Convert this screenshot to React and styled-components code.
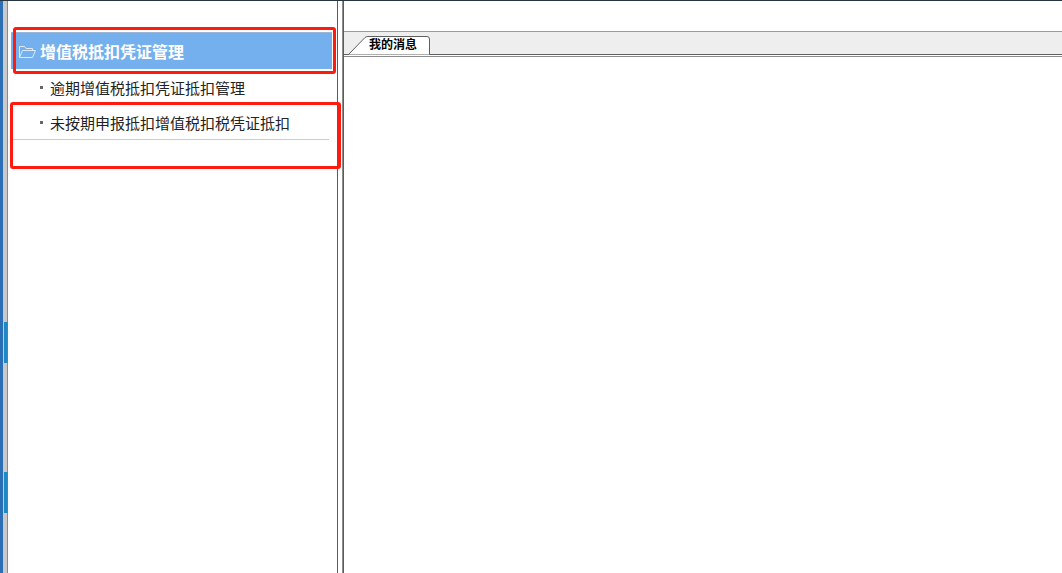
import React from 'react';
import styled, { createGlobalStyle } from 'styled-components';

const Global = createGlobalStyle`
  html, body { margin: 0; padding: 0; background: #fff; overflow: hidden; }
  #root { width: 1062px; height: 573px; }
`;
const Page = styled.div`
  position: relative;
  width: 1062px;
  height: 573px;
  display: flex;
  flex-direction: column;
  background: #fff;
  overflow: hidden;
  font-family: "Liberation Sans", "Noto Sans CJK SC", sans-serif;
`;
const TopLine = styled.div`
  height: 1px;
  flex: none;
  background: #26343f;
`;
const Body = styled.div`
  flex: 1;
  display: flex;
  min-height: 0;
`;
const Rail = styled.div`
  width: 8px;
  flex: none;
  display: flex;
  flex-direction: column;
  background: linear-gradient(90deg, #2c6fb5 0 3px, #b9cfe0 3px 4px, #c9c9c9 4px 7px, #8a8a8a 7px 8px);
`;
const RailSegment = styled.div`
  height: ${p => p.$h}px;
  flex: none;
  background: ${p => p.$blue
    ? 'linear-gradient(90deg, #2c6fb5 0 3px, #b9cfe0 3px 4px, #2188c4 4px 7px, #6a7a88 7px 8px)'
    : 'transparent'};
`;
const Side = styled.div`
  width: 329px;
  flex: none;
  border-right: 1px solid #5c5c5c;
  padding-top: 31px;
  display: flex;
  flex-direction: column;
`;
const Header = styled.div`
  height: 37px;
  margin: 0 5px 0 3px;
  padding-left: 8px;
  display: flex;
  align-items: center;
  gap: 4px;
  background: #74afee;
  border-top: 1px solid #9bb6d6;
  box-sizing: border-box;
  color: #fff;
  font-size: 16px;
  font-weight: 700;
  font-family: "Liberation Serif", "Noto Sans CJK SC", serif;
`;
const MenuItem = styled.div`
  height: ${p => p.$h}px;
  margin: 0 8px 0 3px;
  padding-left: 29px;
  display: flex;
  align-items: center;
  gap: 7px;
  box-sizing: border-box;
  font-size: 15px;
  color: #222;
  border-bottom: ${p => p.$line ? '1px solid #cccccc' : 'none'};
`;
const Dot = styled.span`
  width: 3px;
  height: 3px;
  flex: none;
  background: #666;
`;
const Gap = styled.div`
  width: 4px;
  flex: none;
  background: #fff;
  border-right: 1px solid #8c8c8c;
  box-sizing: content-box;
`;
const Main = styled.div`
  flex: 1;
  display: flex;
  flex-direction: column;
  padding-top: 30px;
  min-width: 0;
  border-left: 1px solid #5c5c5c;
`;
const TabBar = styled.div`
  height: 24px;
  flex: none;
  box-sizing: border-box;
  background: #eeeeee;
  border-top: 1px solid #9a9a9a;
  border-bottom: 1px solid #5f5f5f;
  padding-left: 4px;
  display: flex;
  align-items: flex-end;
`;
const Tab = styled.div`
  position: relative;
  height: 19px;
  margin-bottom: -1px;
  display: flex;
  align-items: center;
  box-sizing: border-box;
`;
const TabShape = styled.svg`
  display: block;
  flex: none;
`;
const TabLabel = styled.span`
  position: absolute;
  left: 21px;
  top: 1px;
  font-size: 12px;
  line-height: 17px;
  font-weight: 700;
  color: #000;
  white-space: nowrap;
`;
const Rule = styled.div`
  height: 1px;
  margin-top: 1px;
  flex: none;
  background: #8c8c8c;
`;
const Annotation = styled.div`
  position: absolute;
  left: ${p => p.$x}px;
  top: ${p => p.$y}px;
  width: ${p => p.$w}px;
  height: ${p => p.$h}px;
  box-sizing: border-box;
  border: 3px solid #ff1a10;
  border-radius: 3px;
  pointer-events: none;
`;

const Folder = () => (
  <svg width="17" height="13" viewBox="0 0 17 13" fill="none" stroke="#dce9f8" strokeWidth="1" style={{ display: 'block', flex: 'none' }}>
    <path d="M0.5 12.5V1.5H5.5L7 3.5H13.5V5.5" />
    <path d="M0.5 12.5L3.5 5.5H16.5L13.5 12.5Z" />
  </svg>
);

export default function App() {
  return (
    <Page>
      <Global />
      <TopLine />
      <Body>
        <Rail>
          <RailSegment $h={138} />
          <RailSegment $h={1} />
          <RailSegment $h={182} />
          <RailSegment $h={41} $blue />
          <RailSegment $h={109} />
          <RailSegment $h={41} $blue />
        </Rail>
        <Side>
          <Header><Folder />增值税抵扣凭证管理</Header>
          <MenuItem $h={36}><Dot />逾期增值税抵扣凭证抵扣管理</MenuItem>
          <MenuItem $h={35} $line><Dot />未按期申报抵扣增值税扣税凭证抵扣</MenuItem>
        </Side>
        <Gap />
        <Main>
          <TabBar>
            <Tab>
              <TabShape width="84" height="19" viewBox="0 0 84 19">
                <path d="M0.5 18.5L17 1.5Q18 0.5 20 0.5H79Q81.5 0.5 81.5 3V18.5" fill="#fff" stroke="#5f5f5f" />
              </TabShape>
              <TabLabel>我的消息</TabLabel>
            </Tab>
          </TabBar>
          <Rule />
        </Main>
      </Body>
      <Annotation $x={13} $y={27} $w={323} $h={47} />
      <Annotation $x={10} $y={102} $w={331} $h={67} />
    </Page>
  );
}
